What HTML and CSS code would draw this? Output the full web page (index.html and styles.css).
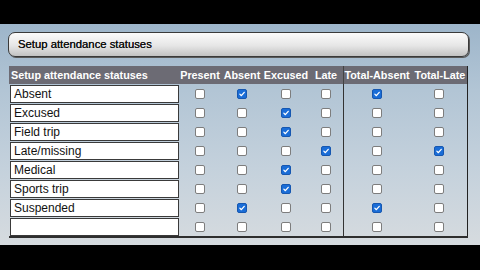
FILE: index.html
```html
<!DOCTYPE html>
<html lang="en">
<head>
  <meta charset="UTF-8">
  <title>Setup attendance statuses</title>
  <link rel="stylesheet" href="styles.css">
</head>
<body>

<div class="bar"></div>

<div class="stage">
  <div class="title-bar">Setup attendance statuses</div>

  <div class="statuses">
    <div class="row head">
      <div class="cell name-head">Setup attendance statuses</div>
      <div class="cell">Present</div>
      <div class="cell">Absent</div>
      <div class="cell">Excused</div>
      <div class="cell">Late</div>
      <div class="cell total">Total-Absent</div>
      <div class="cell last">Total-Late</div>
    </div>

    <!-- one row per status -->
    <div class="row">
      <div class="cell"><div class="name-box">Absent</div></div>
      <div class="cell"><span class="cb"></span></div>
      <div class="cell"><span class="cb on"><svg viewBox="0 0 10 10"><path d="M2.3 5.2 L4.2 7.1 L7.8 2.9"/></svg></span></div>
      <div class="cell"><span class="cb"></span></div>
      <div class="cell"><span class="cb"></span></div>
      <div class="cell total"><span class="cb on"><svg viewBox="0 0 10 10"><path d="M2.3 5.2 L4.2 7.1 L7.8 2.9"/></svg></span></div>
      <div class="cell last"><span class="cb"></span></div>
    </div>
    <div class="row">
      <div class="cell"><div class="name-box">Excused</div></div>
      <div class="cell"><span class="cb"></span></div>
      <div class="cell"><span class="cb"></span></div>
      <div class="cell"><span class="cb on"><svg viewBox="0 0 10 10"><path d="M2.3 5.2 L4.2 7.1 L7.8 2.9"/></svg></span></div>
      <div class="cell"><span class="cb"></span></div>
      <div class="cell total"><span class="cb"></span></div>
      <div class="cell last"><span class="cb"></span></div>
    </div>
    <div class="row">
      <div class="cell"><div class="name-box">Field trip</div></div>
      <div class="cell"><span class="cb"></span></div>
      <div class="cell"><span class="cb"></span></div>
      <div class="cell"><span class="cb on"><svg viewBox="0 0 10 10"><path d="M2.3 5.2 L4.2 7.1 L7.8 2.9"/></svg></span></div>
      <div class="cell"><span class="cb"></span></div>
      <div class="cell total"><span class="cb"></span></div>
      <div class="cell last"><span class="cb"></span></div>
    </div>
    <div class="row">
      <div class="cell"><div class="name-box">Late/missing</div></div>
      <div class="cell"><span class="cb"></span></div>
      <div class="cell"><span class="cb"></span></div>
      <div class="cell"><span class="cb"></span></div>
      <div class="cell"><span class="cb on"><svg viewBox="0 0 10 10"><path d="M2.3 5.2 L4.2 7.1 L7.8 2.9"/></svg></span></div>
      <div class="cell total"><span class="cb"></span></div>
      <div class="cell last"><span class="cb on"><svg viewBox="0 0 10 10"><path d="M2.3 5.2 L4.2 7.1 L7.8 2.9"/></svg></span></div>
    </div>
    <div class="row">
      <div class="cell"><div class="name-box">Medical</div></div>
      <div class="cell"><span class="cb"></span></div>
      <div class="cell"><span class="cb"></span></div>
      <div class="cell"><span class="cb on"><svg viewBox="0 0 10 10"><path d="M2.3 5.2 L4.2 7.1 L7.8 2.9"/></svg></span></div>
      <div class="cell"><span class="cb"></span></div>
      <div class="cell total"><span class="cb"></span></div>
      <div class="cell last"><span class="cb"></span></div>
    </div>
    <div class="row">
      <div class="cell"><div class="name-box">Sports trip</div></div>
      <div class="cell"><span class="cb"></span></div>
      <div class="cell"><span class="cb"></span></div>
      <div class="cell"><span class="cb on"><svg viewBox="0 0 10 10"><path d="M2.3 5.2 L4.2 7.1 L7.8 2.9"/></svg></span></div>
      <div class="cell"><span class="cb"></span></div>
      <div class="cell total"><span class="cb"></span></div>
      <div class="cell last"><span class="cb"></span></div>
    </div>
    <div class="row">
      <div class="cell"><div class="name-box">Suspended</div></div>
      <div class="cell"><span class="cb"></span></div>
      <div class="cell"><span class="cb on"><svg viewBox="0 0 10 10"><path d="M2.3 5.2 L4.2 7.1 L7.8 2.9"/></svg></span></div>
      <div class="cell"><span class="cb"></span></div>
      <div class="cell"><span class="cb"></span></div>
      <div class="cell total"><span class="cb on"><svg viewBox="0 0 10 10"><path d="M2.3 5.2 L4.2 7.1 L7.8 2.9"/></svg></span></div>
      <div class="cell last"><span class="cb"></span></div>
    </div>
    <div class="row">
      <div class="cell"><div class="name-box"></div></div>
      <div class="cell"><span class="cb"></span></div>
      <div class="cell"><span class="cb"></span></div>
      <div class="cell"><span class="cb"></span></div>
      <div class="cell"><span class="cb"></span></div>
      <div class="cell total"><span class="cb"></span></div>
      <div class="cell last"><span class="cb"></span></div>
    </div>
  </div>
</div>

<div class="bar"></div>

</body>
</html>
```

FILE: styles.css
```css
body {
  margin: 0;
  background-color: #000;
  font-family: "Liberation Sans", Arial, sans-serif;
  width: 480px;
  height: 270px;
  overflow: hidden;
}

.bar {
  height: 24px;
  background-color: #000;
}

.stage {
  height: 221px;
  box-sizing: border-box;
  padding: 8px 0 0 8px;
  background: linear-gradient(to bottom, #9db5ca 0%, #b2c5d5 30%, #c4d1dc 65%, #d6dbdf 100%);
}

.title-bar {
  width: 461px;
  height: 25px;
  box-sizing: border-box;
  border: 1px solid #3a3a3a;
  border-radius: 7px;
  background: linear-gradient(to bottom, #fbfbfb 0%, #e6e6e6 55%, #c2c2c2 100%);
  box-shadow: 1px 1px 0 #5a5a5a;
  padding-left: 9px;
  font-size: 11.3px;
  line-height: 23px;
  color: #111;
  text-shadow: 0 0 0.4px #111;
}

.statuses {
  margin: 9px 0 0 1px;
  width: 459px;
  border-bottom: 2px solid #2e2e2e;
}

.row {
  display: grid;
  grid-template-columns: 170px 42px 42px 46px 34px 67px 58px;
  height: 19px;
}

.cell {
  display: flex;
  align-items: center;
  justify-content: center;
  padding-top: 1px;
  box-sizing: border-box;
}

.cell.total {
  border-left: 1px solid #333;
}

.cell.last {
  border-right: 1px solid #222;
}

/* header */
.head {
  height: 18px;
  background-color: #6c6b74;
  color: #fff;
  font-size: 10.8px;
  font-weight: bold;
  white-space: nowrap;
}

.head .cell {
  padding-top: 0;
}

.head .name-head {
  justify-content: flex-start;
  padding-left: 2px;
}

.head .cell.total {
  border-left-color: #444;
}

.head .cell.last {
  padding-left: 3px;
}

/* status name box */
.name-box {
  width: 169px;
  height: 18px;
  margin-left: 1px;
  box-sizing: border-box;
  border: 1px solid #3a3a3a;
  background-color: #fff;
  padding-left: 3px;
  font-size: 12px;
  line-height: 16px;
  color: #111;
  align-self: flex-start;
}

.row .cell:first-child {
  justify-content: flex-start;
}

/* checkboxes */
.cb {
  display: inline-block;
  width: 10px;
  height: 10px;
  box-sizing: border-box;
  border: 1px solid #7d7d7d;
  border-radius: 2px;
  background-color: #fff;
}

.cb.on {
  background-color: #1a6dd7;
  border-color: #1657b0;
}

.cb svg {
  display: block;
  width: 8px;
  height: 8px;
}

.cb svg path {
  fill: none;
  stroke: #fff;
  stroke-width: 1.6;
  stroke-linecap: round;
  stroke-linejoin: round;
}
```
